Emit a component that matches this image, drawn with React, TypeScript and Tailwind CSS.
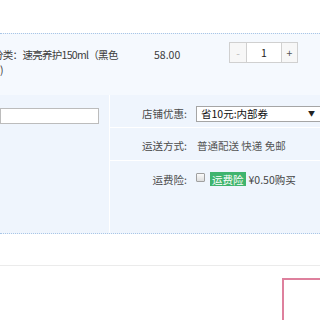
import React from "react";

export default function App() {
  return (
    <div className="w-[320px] h-[320px] overflow-hidden bg-white text-[10.5px] leading-[15px] text-[#3c3c3c] font-['Noto_Sans_CJK_SC','Noto_Sans',sans-serif]">
      <div className="h-[33px]" />
      <div className="border-y border-dotted border-[#a9c6e6] bg-[#eff5fd]">
        {/* item row */}
        <div className="h-[61px] bg-[#f5f9fe] flex pt-[13px]">
          <div className="w-[154px] shrink-0">
            <div className="-ml-[7px] whitespace-nowrap tracking-[-0.7px]">分类：速亮养护150ml（黑色</div>
            <div>)</div>
          </div>
          <div className="w-[75px] shrink-0">58.00</div>
          <div className="flex h-[21px] -mt-[5px] border border-[#d0d0d0] bg-white">
            <div className="w-[17px] flex items-center justify-center text-[#bbbbbb] bg-[#f7f7f7] border-r border-[#d0d0d0]">-</div>
            <div className="w-[34px] flex items-center justify-center text-[#222]">1</div>
            <div className="w-[16px] flex items-center justify-center text-[#555] bg-[#f7f7f7] border-l border-[#d0d0d0]">+</div>
          </div>
        </div>
        {/* order info */}
        <div className="flex h-[138px]">
          <div className="w-[110px] shrink-0 border-r border-white pt-[13px]">
            <div className="h-[16px] w-[99px] border border-[#bcbcbc] bg-white" />
          </div>
          <div className="flex-1 flex flex-col">
            <div className="h-[33px] flex items-center pt-[5px] border-b border-white">
              <div className="w-[77px] text-right text-[#4a4a4a]">店铺优惠:</div>
              <div className="ml-[9px] w-[130px] h-[16px] flex items-center justify-between pl-[4px] pr-[10px] border border-[#a5a5a5] bg-white text-[#111]">
                <span>省10元:内部券</span>
                <span className="text-[7px] text-[#222]">▼</span>
              </div>
            </div>
            <div className="h-[33px] flex items-center pt-[3px] border-b border-white">
              <div className="w-[77px] text-right text-[#4a4a4a]">运送方式:</div>
              <div className="ml-[10px] text-[#555]">普通配送 快递 免邮</div>
            </div>
            <div className="h-[33px] flex items-center pt-[3px]">
              <div className="w-[77px] text-right text-[#4a4a4a]">运费险:</div>
              <div className="ml-[9px] w-[9px] h-[9px] -mt-[4px] border border-[#a0a0a0] rounded-[1px] bg-gradient-to-b from-[#fafafa] to-[#dedede]" />
              <div className="ml-[5px] h-[14px] px-[2px] flex items-center bg-[#3fb46e] text-white">运费险</div>
              <div className="ml-[3px] text-[#444]">¥0.50购买</div>
            </div>
          </div>
        </div>
      </div>
      <div className="h-[31px]" />
      <div className="h-px bg-[#ebebeb]" />
      <div className="flex justify-end pt-[12px]">
        <div className="w-[38px] h-[60px] border-l-2 border-t-2 border-[#de809d] bg-white" />
      </div>
    </div>
  );
}
